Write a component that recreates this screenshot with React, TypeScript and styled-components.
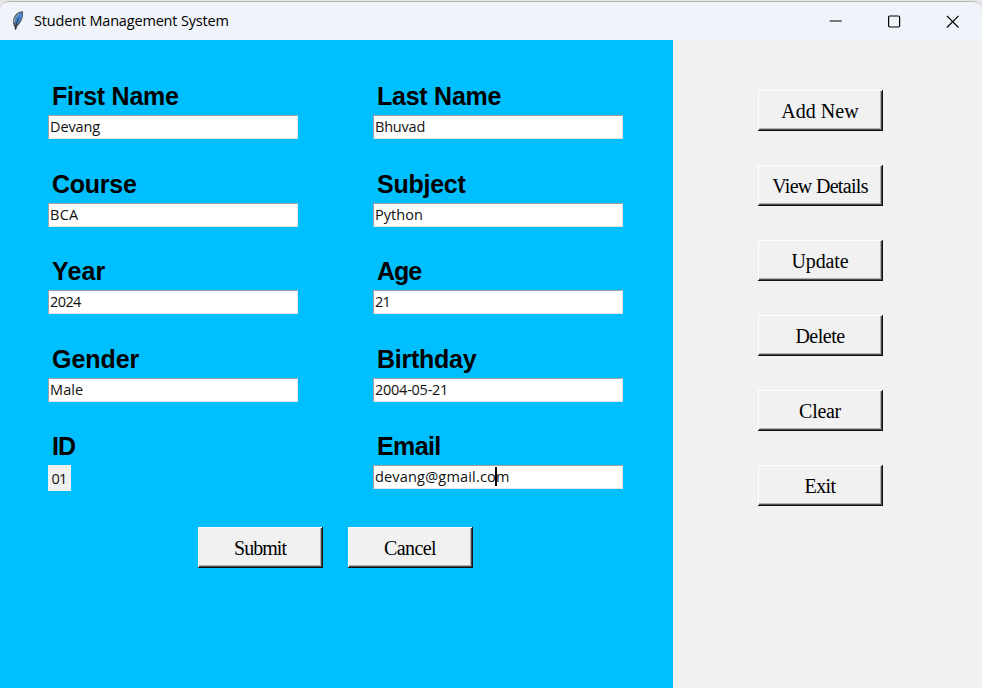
import React from "react";
import styled, { createGlobalStyle } from "styled-components";

const GlobalStyle = createGlobalStyle`
  * { box-sizing: border-box; }
  body { margin: 0; background: #f1f1f1; overflow: hidden; }
`;

const Backdrop = styled.div`
  width: 982px;
  height: 688px;
  background: #e6e6e6;
`;

const Window = styled.div`
  width: 982px;
  height: 688px;
  padding-top: 1px;
  display: flex;
  flex-direction: column;
`;

const TitleBar = styled.header`
  height: 39px;
  flex: none;
  display: flex;
  align-items: center;
  border-top: 1px solid #b4b4b4;
  border-radius: 9px 9px 0 0;
  background: #f0f3fa;
  padding-left: 10px;
`;

const Title = styled.div`
  flex: 1;
  margin-left: 8px;
  font: 14.5px/20px "Open Sans", sans-serif;
  letter-spacing: -0.18px;
  color: #000;
  white-space: nowrap;
`;

const WindowControls = styled.div`
  display: flex;
`;

const ControlButton = styled.div`
  width: 58.5px;
  height: 38px;
  display: flex;
  align-items: center;
  justify-content: center;
`;

const Content = styled.div`
  flex: 1;
  display: flex;
`;

const FormPanel = styled.main`
  width: 673px;
  background: #00bfff;
  padding: 40px 0 0 48px;
`;

const FieldGrid = styled.div`
  display: grid;
  grid-template-columns: 250px 250px;
  column-gap: 75px;
  grid-auto-rows: 87.5px;
`;

const Label = styled.label<{ $track: number }>`
  display: block;
  height: 35px;
  padding: 2px 0 0 4px;
  font: bold 25px/29px "Liberation Sans", Arial, sans-serif;
  letter-spacing: ${(p) => p.$track}px;
  color: #000;
  white-space: nowrap;
`;

const Value = styled.div<{ $track: number }>`
  position: relative;
  width: 250px;
  height: 24px;
  padding-left: 1px;
  border: 1px solid;
  border-color: #a0a0a0 #e3e3e3 #e3e3e3 #a0a0a0;
  background: #fff;
  color: #111;
  font: 14.5px/22px "Open Sans", sans-serif;
  letter-spacing: ${(p) => p.$track}px;
  white-space: nowrap;
`;

const IdBadge = styled(Value)`
  width: 23px;
  height: 26px;
  padding-left: 2.5px;
  border-color: #f0f0f0;
  background: #f0f0f0;
  line-height: 25px;
`;

const Caret = styled.span`
  position: absolute;
  left: 121px;
  top: 1px;
  width: 2px;
  height: 19px;
  background: #000;
`;

const FormActions = styled.div`
  display: flex;
  gap: 25px;
  margin: 9px 0 0 150px;
`;

const SideMenu = styled.aside`
  flex: 1;
  display: flex;
  flex-direction: column;
  gap: 34px;
  padding: 50px 0 0 85px;
  background: #f1f1f1;
`;

const RaisedButton = styled.button<{ $track: number }>`
  width: 125px;
  height: 41px;
  margin: 0;
  padding: 1px 1px 0 0;
  border: 0;
  border-radius: 0;
  background: #f1f1f1;
  box-shadow: inset -1px -1px #111, inset 1px 1px #fff, inset -2px -2px #4a4a4a, inset -3px -3px #b0b0b0;
  font: 20px/24px "Liberation Serif", "Times New Roman", serif;
  letter-spacing: ${(p) => p.$track}px;
  color: #000;
  white-space: nowrap;
`;

const Feather = () => (
  <svg width="16" height="22" viewBox="0 0 16 22">
    <path d="M4.500 17C1.800 13 3 7 6.500 3.500Q9 1.300 13 1.200C13.700 6 12 12 7.500 16L5.800 20L4.800 19.500Z" fill="#555a62" />
    <path d="M5.800 15C4.300 10.500 7.500 4.500 12.300 2.200C12.700 6.500 10.500 12 5.800 15Z" fill="#4388d6" />
    <path d="M9.300 7.500C7.200 10.500 6 13.500 5.600 19.500" fill="none" stroke="#20252b" strokeWidth=".9" />
    <path d="M9.500 3.400C6.200 6 4.600 9 4.300 12.500" fill="none" stroke="#8fb4dd" strokeWidth="1.100" />
  </svg>
);

const fields = [
  { label: "First Name", value: "Devang", lt: -0.25, vt: -0.1 },
  { label: "Last Name", value: "Bhuvad", lt: -0.25, vt: -0.2 },
  { label: "Course", value: "BCA", lt: -0.25, vt: 0.3 },
  { label: "Subject", value: "Python", lt: -0.25, vt: 0.05 },
  { label: "Year", value: "2024", lt: 0.15, vt: -0.6 },
  { label: "Age", value: "21", lt: -1.1, vt: -0.7 },
  { label: "Gender", value: "Male", lt: -0.05, vt: 0.1 },
  { label: "Birthday", value: "2004-05-21", lt: -0.25, vt: -0.25 },
  { label: "ID", value: "01", lt: -0.9, vt: -0.9 },
  { label: "Email", value: "devang@gmail.com", lt: -0.6, vt: 0.18 },
];

const menu = [
  { text: "Add New", track: 0.05 },
  { text: "View Details", track: -0.68 },
  { text: "Update", track: -0.15 },
  { text: "Delete", track: -0.5 },
  { text: "Clear", track: -0.3 },
  { text: "Exit", track: -0.6 },
];

export default function App() {
  return (
    <Backdrop>
      <GlobalStyle />
      <Window>
        <TitleBar>
          <Feather />
          <Title>Student Management System</Title>
          <WindowControls>
            <ControlButton>
              <svg width="13" height="13" viewBox="0 0 13 13">
                <path d="M.7 6H12.700" stroke="#000" strokeWidth="1" />
              </svg>
            </ControlButton>
            <ControlButton>
              <svg width="13" height="13" viewBox="0 0 13 13">
                <rect x=".6" y="1" width="11" height="11" rx="1.200" fill="none" stroke="#000" strokeWidth="1.200" />
              </svg>
            </ControlButton>
            <ControlButton>
              <svg width="13" height="13" viewBox="0 0 13 13">
                <path d="M.9 .9L12.500 12.500M12.500 .9L.9 12.500" stroke="#000" strokeWidth="1.200" />
              </svg>
            </ControlButton>
          </WindowControls>
        </TitleBar>
        <Content>
          <FormPanel>
            <FieldGrid>
              {fields.map((f) => (
                <div key={f.label}>
                  <Label $track={f.lt}>{f.label}</Label>
                  {f.label === "ID" ? (
                    <IdBadge $track={f.vt}>{f.value}</IdBadge>
                  ) : (
                    <Value $track={f.vt}>
                      {f.value}
                      {f.label === "Email" && <Caret />}
                    </Value>
                  )}
                </div>
              ))}
            </FieldGrid>
            <FormActions>
              <RaisedButton $track={-0.95}>Submit</RaisedButton>
              <RaisedButton $track={-0.55}>Cancel</RaisedButton>
            </FormActions>
          </FormPanel>
          <SideMenu>
            {menu.map((m) => (
              <RaisedButton key={m.text} $track={m.track}>{m.text}</RaisedButton>
            ))}
          </SideMenu>
        </Content>
      </Window>
    </Backdrop>
  );
}
